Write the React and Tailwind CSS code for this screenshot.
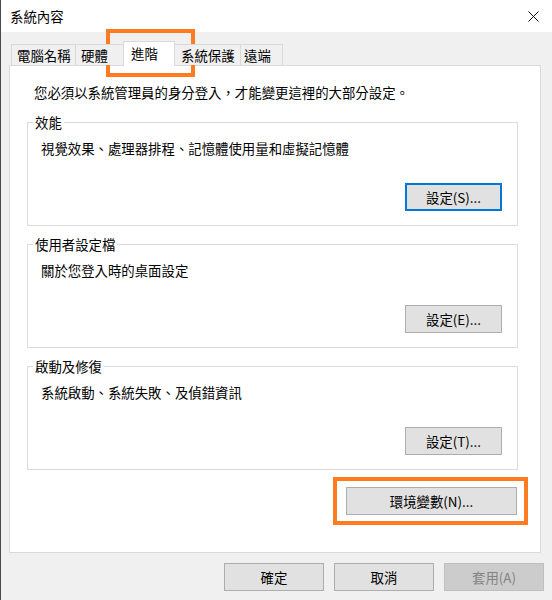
const tabs = [
  { label: "電腦名稱", width: "w-[65px]", text: "pl-[5px]" },
  { label: "硬體", width: "w-[50px]", text: "pl-[5px]" },
  { label: "進階", width: "w-[52px]", text: "pl-[7px]", active: true },
  { label: "系統保護", width: "w-[68px]", text: "pl-[7px]" },
  { label: "遠端", width: "w-[43px]", text: "pl-[3px]" },
];

const groups = [
  { title: "效能", body: "視覺效果、處理器排程、記憶體使用量和虛擬記憶體", button: "設定(S)...", focused: true },
  { title: "使用者設定檔", body: "關於您登入時的桌面設定", button: "設定(E)..." },
  { title: "啟動及修復", body: "系統啟動、系統失敗、及偵錯資訊", button: "設定(T)..." },
];

function Button({ children, className = "", focused = false, disabled = false }) {
  const tone = disabled
    ? "border border-[#bfbfbf] bg-[#cccccc] text-[#838383]"
    : focused
      ? "border-2 border-[#0078d7] bg-[#e1e1e1] text-black"
      : "border border-[#adadad] bg-[#e1e1e1] text-black";
  return (
    <button type="button" className={`flex h-[28px] items-center justify-center leading-[18px] ${tone} ${className}`}>
      {children}
    </button>
  );
}

export default function App() {
  return (
    <div className="relative h-[600px] w-[552px] overflow-hidden border-l border-[#4a4a4a] bg-[#f0f0f0] font-['Noto_Sans_CJK_TC','Microsoft_JhengHei',sans-serif] text-[13.4px] text-black">
      <div className="flex h-[32px] items-center justify-between bg-white pl-[9px] pr-[13px]">
        <span className="leading-[18px]">系統內容</span>
        <svg width="11" height="11" viewBox="0 0 11 11" fill="none" stroke="#111" strokeWidth="1">
          <path d="M0.5 0.5 L10.5 10.5 M10.5 0.5 L0.5 10.5" />
        </svg>
      </div>

      <div className="pl-[8px] pr-[11px] pt-[9px]">
        <div className="relative z-10 flex h-[24px] items-end pl-[2px]">
          {tabs.map((tab, i) =>
            tab.active ? (
              <div
                key={tab.label}
                className={`relative z-10 -mb-px -ml-[2px] flex h-[25px] items-start border border-b-0 border-[#d9d9d9] bg-white pt-[2px] leading-[18px] ${tab.width} ${tab.text}`}
              >
                {tab.label}
              </div>
            ) : (
              <div
                key={tab.label}
                className={`flex h-[21px] items-center border border-b-0 border-[#d9d9d9] bg-[#f0f0f0] leading-[18px] ${i === 0 ? "" : i === 3 ? "-ml-[2px]" : "-ml-px"} ${tab.width} ${tab.text}`}
              >
                {tab.label}
              </div>
            )
          )}
        </div>

        <div className="h-[488px] w-[532px] border border-[#d9d9d9] bg-white">
          <p className="pl-[24px] pt-[17px] leading-[18px]">您必須以系統管理員的身分登入，才能變更這裡的大部分設定。</p>

          <div className="flex w-[508px] flex-col gap-[10px] pl-[17px] pt-[13px]">
            {groups.map((group) => (
              <fieldset key={group.title} className="w-[491px] border border-[#dcdcdc] pb-[14px] pl-[13px] pr-[15px]">
                <legend className="-ml-[8px] px-[2px] leading-[16px]">{group.title}</legend>
                <p className="mt-[9px] leading-[18px]">{group.body}</p>
                <div className="mt-[26px] flex justify-end">
                  <Button focused={group.focused} className="w-[97px]">{group.button}</Button>
                </div>
              </fieldset>
            ))}
          </div>

          <div className="flex w-[508px] justify-end pr-[1px] pt-[17px]">
            <Button className="w-[171px]">環境變數(N)...</Button>
          </div>
        </div>
      </div>

      <div className="flex justify-end gap-[10px] pr-[8px] pt-[10px]">
        <Button className="w-[100px]">確定</Button>
        <Button className="w-[100px]">取消</Button>
        <Button disabled className="w-[100px]">套用(A)</Button>
      </div>

      <div className="pointer-events-none absolute left-[105px] top-[29px] h-[48px] w-[89px] border-4 border-[#ff7b22]" />
      <div className="pointer-events-none absolute left-[332px] top-[477px] h-[48px] w-[195px] border-4 border-[#ff7b22]" />
    </div>
  );
}
